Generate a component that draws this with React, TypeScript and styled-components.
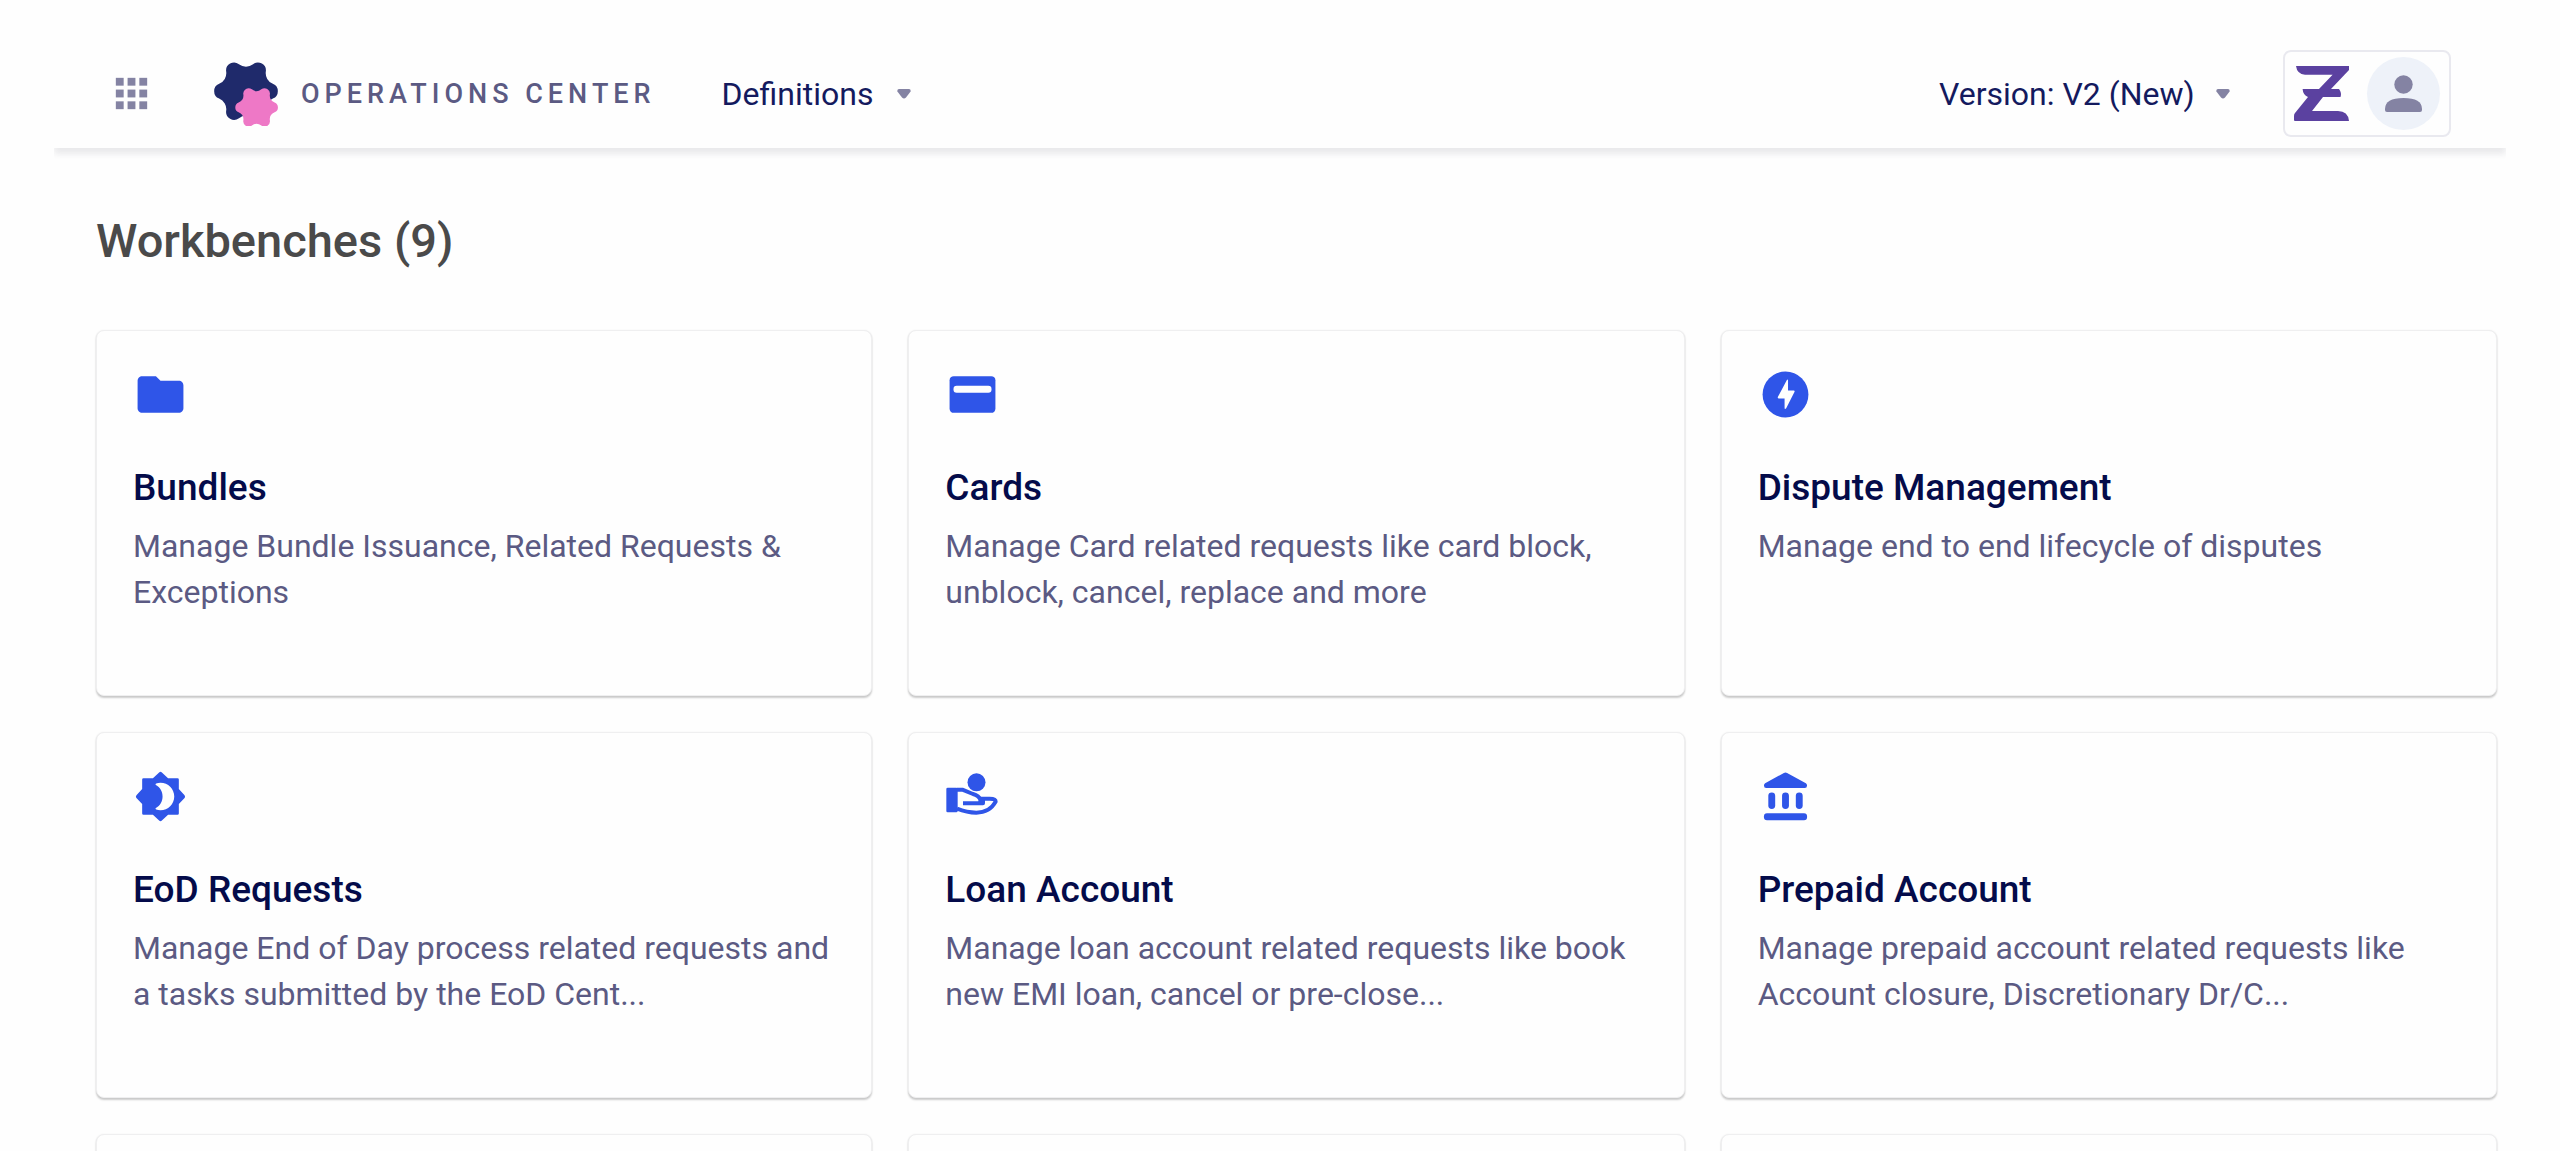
import React from "react";
import styled, { createGlobalStyle } from "styled-components";

const color = {
  navy: "#040b4a",
  nav: "#141a5e",
  slate: "#5b5a83",
  muted: "#8483a3",
  heading: "#4a4a4a",
  blue: "#2f55e8",
  line: "#e9e9ef",
};

const GlobalStyle = createGlobalStyle`
  *, *::before, *::after { box-sizing: border-box; }
  body {
    margin: 0;
    background: #fefefe;
    font-family: Roboto, "Liberation Sans", sans-serif;
  }
`;

const Page = styled.div`
  height: 100vh;
  overflow: hidden;
`;

const Header = styled.header`
  display: flex;
  align-items: center;
  margin: 0 54px;
  padding: 50px 55px 11px 54px;
  background: #fefefe;
  box-shadow: 0 6px 6px rgba(30, 30, 50, 0.09);
  clip-path: inset(0 0 -16px 0);
`;

const PlainButton = styled.button`
  display: flex;
  align-items: center;
  padding: 0;
  border: 0;
  background: none;
  color: ${color.nav};
  font: inherit;
  cursor: pointer;
`;

const AppsIcon = styled.svg`
  display: block;
  width: 47px;
  height: 47px;
  fill: ${color.muted};
`;

const Brand = styled.a`
  display: flex;
  align-items: center;
  gap: 23px;
  margin: 0 66px 0 59px;
  color: ${color.slate};
  font-size: 27px;
  font-weight: 500;
  line-height: 46px;
  letter-spacing: 5px;
  text-decoration: none;
`;

const BrandMark = styled.svg`
  width: 64px;
  height: 64px;
`;

const MenuButton = styled(PlainButton)`
  gap: 24px;
  font-size: 32px;
  line-height: 46px;
`;

const Chevron = styled.svg`
  width: 14px;
  height: 10px;
  fill: ${color.muted};
`;

const VersionPicker = styled.label`
  display: grid;
  align-items: center;
  margin-left: auto;

  & > * {
    grid-area: 1 / 1;
  }
  & > svg {
    justify-self: end;
    pointer-events: none;
  }
`;

const VersionSelect = styled.select`
  appearance: none;
  margin: 0;
  padding: 0 35px 0 0;
  border: 0;
  background: none;
  color: ${color.nav};
  font: inherit;
  font-size: 32px;
  line-height: 46px;
  cursor: pointer;
`;

const Account = styled(PlainButton)`
  gap: 18px;
  margin-left: 53px;
  padding: 5px 9px;
  border: 2px solid ${color.line};
  border-radius: 8px;
`;

const TenantLogo = styled.svg`
  width: 55px;
  height: 55px;
  fill: #5b41a0;
`;

const Avatar = styled.svg`
  width: 73px;
  height: 73px;
  border-radius: 50%;
  background: #eef2f9;
  fill: ${color.muted};
`;

const Main = styled.main`
  padding: 63px 63px 36px 96px;
`;

const Heading = styled.h1`
  margin: 0 0 59px;
  color: ${color.heading};
  font-size: 47px;
  font-weight: 500;
  line-height: 60px;
`;

const CardGrid = styled.div`
  display: grid;
  grid-template-columns: repeat(3, minmax(0, 1fr));
  gap: 36px;
`;

const Card = styled.a`
  display: block;
  min-height: 366px;
  padding: 36px;
  border: 1px solid #efeff0;
  border-radius: 8px;
  background: #fefefe;
  box-shadow: 0 2px 2px rgba(0, 0, 0, 0.2), 0 0 2px rgba(0, 0, 0, 0.06);
  color: inherit;
  text-decoration: none;
`;

const CardIcon = styled.svg`
  display: block;
  width: 55px;
  height: 55px;
  margin-bottom: 43px;
  fill: ${color.blue};
`;

const CardTitle = styled.h2`
  margin: 0 0 12px;
  color: ${color.navy};
  font-size: 37px;
  font-weight: 500;
  line-height: 46px;
`;

const CardText = styled.p`
  margin: 0;
  color: ${color.slate};
  font-size: 32px;
  line-height: 46px;
`;

/** Six round lobes on a hexagon, joined by concave fillets. */
function blobPath(cx: number, cy: number, scale: number) {
  const ring = 72 * scale;
  const lobe = 24 * scale;
  const fillet = 34.5 * scale;
  const reach = 108.5 * scale;
  const at = (r: number, deg: number) => {
    const a = (deg * Math.PI) / 180;
    return [cx + r * Math.cos(a), cy + r * Math.sin(a)];
  };
  const touch = (lobeDeg: number, valleyDeg: number) => {
    const [lx, ly] = at(ring, lobeDeg);
    const [vx, vy] = at(reach, valleyDeg);
    const k = lobe / Math.hypot(vx - lx, vy - ly);
    return `${(lx + (vx - lx) * k).toFixed(2)} ${(ly + (vy - ly) * k).toFixed(2)}`;
  };
  let d = `M${touch(0, -30)}`;
  for (let deg = 0; deg < 360; deg += 60) {
    d += `A${lobe} ${lobe} 0 0 1 ${touch(deg, deg + 30)}`;
    d += `A${fillet} ${fillet} 0 0 0 ${touch(deg + 60, deg + 30)}`;
  }
  return d + "Z";
}

const Caret = () => (
  <Chevron viewBox="0 0 14 10" aria-hidden="true">
    <path d="M2 0H12Q14 0.4 13.6 2.4L9 8.6Q7 10.6 5 8.6L0.4 2.4Q0 0.4 2 0Z" />
  </Chevron>
);

const FolderIcon = () => (
  <CardIcon viewBox="0 0 24 24" aria-hidden="true">
    <path d="M10 4H4c-1.1 0-1.99.9-1.99 2L2 18c0 1.1.9 2 2 2h16c1.1 0 2-.9 2-2V8c0-1.1-.9-2-2-2h-8l-2-2z" />
  </CardIcon>
);

const CardsIcon = () => (
  <CardIcon viewBox="0 0 24 24" aria-hidden="true">
    <rect x="2" y="4" width="20" height="16" rx="1.8" />
    <rect x="3.7" y="8.2" width="16.6" height="3" rx="1.4" fill="#fefefe" />
  </CardIcon>
);

const BoltIcon = () => (
  <CardIcon viewBox="0 0 24 24" aria-hidden="true">
    <circle cx="12" cy="12" r="10" />
    <path
      d="M12.6 5.7Q13.1 5.2 13.1 6V10.2H15.6Q16.2 10.3 15.9 10.9L12.3 18Q11.6 18.8 11.6 17.8V13.7H9Q8.4 13.6 8.7 13Z"
      fill="#fefefe"
    />
  </CardIcon>
);

const EndOfDayIcon = () => (
  <CardIcon viewBox="0 0 24 24" aria-hidden="true">
    <path d="M20 8.69V4.6Q20 4 19.4 4H15.31L12.6 1.5Q12 1 11.4 1.5L8.69 4H4.6Q4 4 4 4.6V8.69L1.5 11.4Q1 12 1.5 12.6L4 15.31V19.4Q4 20 4.6 20H8.69L11.4 22.5Q12 23 12.6 22.5L15.31 20H19.4Q20 20 20 19.4V15.31L22.5 12.6Q23 12 22.500 11.4Z" />
    <path
      d="M12 18c-.7 0-1.3-.1-1.9-.3q-.6-.3-.1-.7C11.8 16 12.9 14.2 12.9 12S11.8 8 10 7q-.5-.4.1-.7C10.7 6.1 11.3 6 12 6c3.31 0 6 2.69 6 6s-2.69 6-6 6z"
      fill="#fefefe"
    />
  </CardIcon>
);

const LoanIcon = () => (
  <CardIcon viewBox="14 12 165 165" aria-hidden="true">
    <circle cx="108.5" cy="52" r="27" />
    <rect x="18" y="68" width="34" height="74" rx="4" />
    <g fill="none" stroke={color.blue} strokeWidth="12" strokeLinejoin="round">
      <path d="M50 74H66L98 87Q116 92 120 104V115" />
      <path d="M68 115H128V102" />
      <path d="M116 101H148Q166 101 166 110Q148 143 108 143Q80 143 50 131" />
    </g>
  </CardIcon>
);

const BankIcon = () => (
  <CardIcon viewBox="0 0 24 24" aria-hidden="true">
    <path d="M11.3 1.7Q12 1.3 12.7 1.7L20.9 6.2Q21.4 6.5 21.4 7.2Q21.4 8.3 20.4 8.3H3.6Q2.6 8.3 2.6 7.2Q2.6 6.5 3.1 6.2Z" />
    <rect x="4.5" y="10.2" width="3" height="7.2" rx="1.5" />
    <rect x="10.5" y="10.2" width="3" height="7.2" rx="1.5" />
    <rect x="16.5" y="10.2" width="3" height="7.2" rx="1.5" />
    <rect x="2.6" y="19.3" width="18.8" height="3.1" rx="1.3" />
  </CardIcon>
);

const workbenches = [
  { icon: FolderIcon, title: "Bundles", text: "Manage Bundle Issuance, Related Requests & Exceptions" },
  { icon: CardsIcon, title: "Cards", text: "Manage Card related requests like card block, unblock, cancel, replace and more" },
  { icon: BoltIcon, title: "Dispute Management", text: "Manage end to end lifecycle of disputes" },
  { icon: EndOfDayIcon, title: "EoD Requests", text: "Manage End of Day process related requests and a tasks submitted by the EoD Cent..." },
  { icon: LoanIcon, title: "Loan Account", text: "Manage loan account related requests like book new EMI loan, cancel or pre-close..." },
  { icon: BankIcon, title: "Prepaid Account", text: "Manage prepaid account related requests like Account closure, Discretionary Dr/C..." },
];

const upcoming = [7, 8, 9];

export default function App() {
  return (
    <Page>
      <GlobalStyle />
      <Header>
        <PlainButton type="button" aria-label="Apps">
          <AppsIcon viewBox="0 0 24 24" aria-hidden="true">
            {[4, 10, 16].map((y) =>
              [4, 10, 16].map((x) => <rect key={`${x}-${y}`} x={x} y={y} width="4" height="4" />)
            )}
          </AppsIcon>
        </PlainButton>
        <Brand href="#">
          <BrandMark viewBox="27 17 192 193" aria-hidden="true">
            <path d={blobPath(123, 105, 1)} fill="#1f2a6b" />
            <path d={blobPath(155, 154, 0.67)} fill="#ee78c6" />
          </BrandMark>
          <span>OPERATIONS CENTER</span>
        </Brand>
        <MenuButton type="button" aria-haspopup="menu">
          Definitions
          <Caret />
        </MenuButton>
        <VersionPicker>
          <VersionSelect aria-label="Version" defaultValue="v2">
            <option value="v2">Version: V2 (New)</option>
          </VersionSelect>
          <Caret />
        </VersionPicker>
        <Account type="button" aria-label="Account">
          <TenantLogo viewBox="0 0 55 55" aria-hidden="true">
            <path d="M2 0H55V4L37 23H45Q48 27 46.5 31H29L18 45H44Q54 45 55 55H1Q0 55 0 54V50Q0 48 1 47L14 31Q9 29 8.6 23H25L38.6 8.7H11Q3 8 2 0Z" />
          </TenantLogo>
          <Avatar viewBox="0 0 73 73" aria-hidden="true">
            <circle cx="36.5" cy="27.5" r="9.2" />
            <path d="M18 52Q18 41 36.5 41T55 52V53Q55 55 53 55H20Q18 55 18 53Z" />
          </Avatar>
        </Account>
      </Header>
      <Main>
        <Heading>Workbenches (9)</Heading>
        <CardGrid>
          {workbenches.map(({ icon: Icon, title, text }) => (
            <Card key={title} href="#">
              <Icon />
              <CardTitle>{title}</CardTitle>
              <CardText>{text}</CardText>
            </Card>
          ))}
          {upcoming.map((slot) => (
            <Card key={slot} as="div" />
          ))}
        </CardGrid>
      </Main>
    </Page>
  );
}
